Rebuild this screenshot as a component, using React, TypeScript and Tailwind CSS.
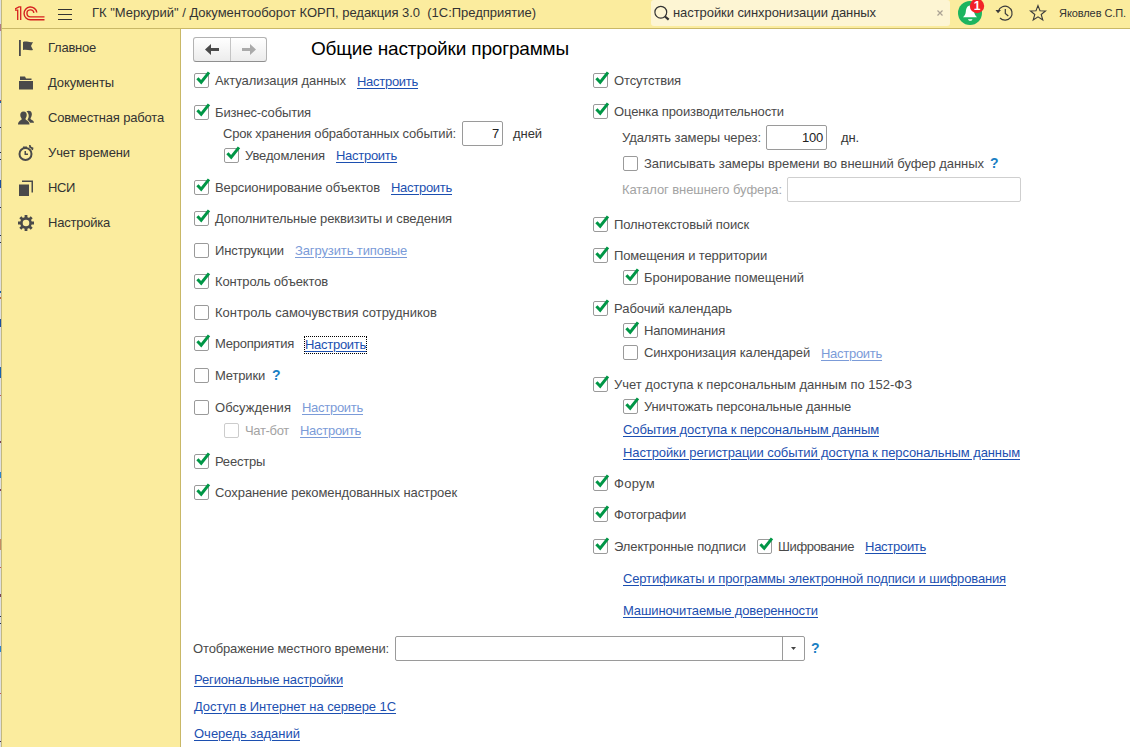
import { useMemo, type ReactNode } from "react";

const FAMILY = '"Liberation Sans", Arial, sans-serif';

/** Single line of text whose letter spacing is fitted to a given width. */
function T({ children, w, size = 13, className = "" }: { children: string; w: number; size?: number; className?: string }) {
  const spacing = useMemo(() => {
    const ctx = document.createElement("canvas").getContext("2d");
    if (!ctx) return 0;
    ctx.font = `${size}px ${FAMILY}`;
    return (w - ctx.measureText(children).width) / children.length;
  }, [children, w, size]);
  return (
    <span className={`shrink-0 whitespace-pre ${className}`} style={{ letterSpacing: `${spacing}px`, fontSize: `${size}px` }}>
      {children}
    </span>
  );
}

function Link({ children, w, off = false, className = "" }: { children: string; w: number; off?: boolean; className?: string }) {
  return (
    <a className={`flex shrink-0 underline decoration-1 underline-offset-2 ${off ? "text-[#7b9bd8]" : "text-[#1c4fb0]"} ${className}`}>
      <T w={w}>{children}</T>
    </a>
  );
}

const Setup = ({ off, className }: { off?: boolean; className?: string }) => (
  <Link w={61} off={off} className={className ?? "ml-[11px]"}>Настроить</Link>
);

function Check({ on = false, off = false, className = "" }: { on?: boolean; off?: boolean; className?: string }) {
  return (
    <span className={`mr-1.5 flex h-[15px] w-[15px] shrink-0 rounded-[2px] border bg-white ${off ? "border-[#cccccc]" : "border-[#9a9a9a]"} ${className}`}>
      {on && (
        <svg viewBox="0 0 16 16" className="-mt-0.5 h-4 w-4 shrink-0 overflow-visible">
          <path d="M2.4 6.2 L6.2 10.2 L14 .4" fill="none" stroke="#009646" strokeWidth="3" />
        </svg>
      )}
    </span>
  );
}

const Help = ({ className = "ml-[7px]" }: { className?: string }) => (
  <span className={`text-[14px] font-bold text-[#1a7fc4] ${className}`}>?</span>
);

function Row({ children, className = "" }: { children: ReactNode; className?: string }) {
  return <div className={`flex h-[21px] shrink-0 items-center leading-[21px] ${className}`}>{children}</div>;
}

function LeftColumn() {
  return (
    <div className="flex w-[399px] shrink-0 flex-col">
      <Row><Check on /><T w={131}>Актуализация данных</T><Setup className="mt-0.5 ml-[11px]" /></Row>
      <Row className="mt-[11px]"><Check on /><T w={96}>Бизнес-события</T></Row>
      <Row className="pl-[29px]">
        <T w={233}>Срок хранения обработанных событий:</T>
        <span className="ml-1.5 flex h-[25px] w-[41px] shrink-0 items-center justify-end rounded-[2px] border border-[#9a9a9a] pr-[3px] text-[#222]"><T w={7}>7</T></span>
        <T w={29} className="ml-[10px] text-[#333]">дней</T>
      </Row>
      <Row className="mt-px pl-[30px]"><Check on /><T w={80}>Уведомления</T><Setup /></Row>
      <Row className="mt-[11px]"><Check on /><T w={165}>Версионирование объектов</T><Setup /></Row>
      <Row className="mt-[10px]"><Check on /><T w={237}>Дополнительные реквизиты и сведения</T></Row>
      <Row className="mt-[11px]"><Check /><T w={69}>Инструкции</T><Link w={112} off className="ml-[11px]">Загрузить типовые</Link></Row>
      <Row className="mt-[10px]"><Check on /><T w={113}>Контроль объектов</T></Row>
      <Row className="mt-[10px]"><Check /><T w={222}>Контроль самочувствия сотрудников</T></Row>
      <Row className="mt-[10px]">
        <Check on /><T w={79}>Мероприятия</T>
        <Setup className="mt-0.5 ml-[10px] h-[18px] w-[63px] items-center border border-dotted border-black" />
      </Row>
      <Row className="mt-[11px]"><Check /><T w={50}>Метрики</T><Help /></Row>
      <Row className="mt-[11px]"><Check /><T w={76}>Обсуждения</T><Setup off /></Row>
      <Row className="mt-0.5 pl-[30px]"><Check off /><T w={44} className="text-[#a3a3a3]">Чат-бот</T><Setup off /></Row>
      <Row className="mt-[10px]"><Check on /><T w={50}>Реестры</T></Row>
      <Row className="mt-[10px]"><Check on /><T w={242}>Сохранение рекомендованных настроек</T></Row>
    </div>
  );
}

function RightColumn() {
  return (
    <div className="flex flex-1 flex-col">
      <Row><Check on /><T w={67}>Отсутствия</T></Row>
      <Row className="mt-[10px]"><Check on /><T w={170}>Оценка производительности</T></Row>
      <Row className="mt-[5px] pl-[29px]">
        <T w={139}>Удалять замеры через:</T>
        <span className="ml-[5px] flex h-[25px] w-[61px] shrink-0 items-center justify-end rounded-[2px] border border-[#9a9a9a] pr-[3px] text-[#222]"><T w={21}>100</T></span>
        <T w={18} className="ml-[14px] text-[#333]">дн.</T>
      </Row>
      <Row className="mt-[5px] pl-[30px]"><Check /><T w={340}>Записывать замеры времени во внешний буфер данных</T><Help className="ml-1.5" /></Row>
      <Row className="mt-[5px] pl-[29px]">
        <T w={160} className="text-[#a3a3a3]">Каталог внешнего буфера:</T>
        <span className="ml-[5px] h-[25px] w-[234px] shrink-0 rounded-[2px] border border-[#cfcfcf]" />
      </Row>
      <Row className="mt-[14px]"><Check on /><T w={135}>Полнотекстовый поиск</T></Row>
      <Row className="mt-[10px]"><Check on /><T w={153}>Помещения и территории</T></Row>
      <Row className="mt-px pl-[30px]"><Check on /><T w={160}>Бронирование помещений</T></Row>
      <Row className="mt-[10px]"><Check on /><T w={118}>Рабочий календарь</T></Row>
      <Row className="mt-px pl-[30px]"><Check on /><T w={81}>Напоминания</T></Row>
      <Row className="mt-px pl-[30px]"><Check /><T w={166}>Синхронизация календарей</T><Setup off className="mt-0.5 ml-[11px]" /></Row>
      <Row className="mt-[11px]"><Check on /><T w={298}>Учет доступа к персональным данным по 152-ФЗ</T></Row>
      <Row className="mt-px pl-[30px]"><Check on /><T w={207}>Уничтожать персональные данные</T></Row>
      <Row className="mt-0.5 pl-[30px]"><Link w={256}>События доступа к персональным данным</Link></Row>
      <Row className="mt-0.5 pl-[30px]"><Link w={397}>Настройки регистрации событий доступа к персональным данным</Link></Row>
      <Row className="mt-[10px]"><Check on /><T w={41}>Форум</T></Row>
      <Row className="mt-[10px]"><Check on /><T w={72}>Фотографии</T></Row>
      <Row className="mt-[11px]">
        <Check on /><T w={132}>Электронные подписи</T>
        <Check on className="ml-[11px]" /><T w={76}>Шифрование</T><Setup />
      </Row>
      <Row className="mt-[11px] pl-[30px]"><Link w={383}>Сертификаты и программы электронной подписи и шифрования</Link></Row>
      <Row className="mt-[11px] pl-[30px]"><Link w={195}>Машиночитаемые доверенности</Link></Row>
    </div>
  );
}

function Header() {
  return (
    <header className="flex h-[29px] shrink-0 items-center border-b border-[#c9b867] bg-[#fbec9e] leading-[26px] text-[#333]">
      <svg viewBox="0 0 30 15" className="-mt-px ml-[13px] h-[15px] w-[30px] shrink-0" fill="none" stroke="#d6201f">
        <path d="M0 4.200h2.700V14M0 2.900L4 .8h1.700V14" strokeWidth="1.300" />
        <path d="M21.800 6.500A6.400 6.400 0 1 0 15.400 13.800H29.500" strokeWidth="1.400" />
        <path d="M18.900 6.800A3.500 3.500 0 1 0 15.400 10.900H29.500" strokeWidth="1.400" />
      </svg>
      <svg viewBox="0 0 14 12" className="mt-px ml-[13px] h-3 w-3.5 shrink-0" fill="none" stroke="#333">
        <path d="M0 .5h14M0 5.5h14M0 10.5h14" />
      </svg>
      <T w={444} className="-mt-0.5 ml-5">{'ГК "Меркурий" / Документооборот КОРП, редакция 3.0  (1С:Предприятие)'}</T>
      <div className="-mt-0.5 ml-[115px] flex h-[26px] w-[299px] shrink-0 items-center rounded-[3px] bg-[#fdf5d3]">
        <svg viewBox="0 0 16 16" className="ml-[3px] h-4 w-4 shrink-0" fill="none" stroke="#333">
          <circle cx="6.8" cy="7.2" r="5.9" strokeWidth="1.2" />
          <path d="M11 11.5l3.7 3.2" strokeWidth="2.2" />
        </svg>
        <T w={203} className="ml-[3px]">настройки синхронизации данных</T>
        <svg viewBox="0 0 6 6" className="ml-[61px] h-1.5 w-1.5 shrink-0" stroke="#aaa294" strokeWidth="1.200"><path d="M.5.5l5 5M5.5.5l-5 5" /></svg>
      </div>
      <svg viewBox="0 0 28 28" className="ml-2 h-7 w-7 shrink-0">
        <circle cx="12" cy="13" r="12" fill="#1cb45f" />
        <path d="M12 5.5c-3.2.4-3.8 3.3-4.2 6.2-.3 2.5-1 3.8-2.8 5.6h14c-1.800-1.800-2.500-3.100-2.800-5.600C15.800 8.800 15.200 5.900 12 5.500zM10 19.300h4.500c-.4 1-1.200 1.500-2.200 1.500s-1.900-.5-2.300-1.500z" fill="#fff" />
        <circle cx="19" cy="6" r="7.2" fill="#f22227" />
        <text x="19" y="10" textAnchor="middle" fontSize="12" fontWeight="bold" fill="#fff">1</text>
      </svg>
      <svg viewBox="0 0 16 16" className="-mt-0.5 ml-[11px] h-4 w-4 shrink-0 overflow-visible" fill="none" stroke="#3b3b3b" strokeWidth="1.2">
        <path d="M1.400 6A7 7 0 1 1 3 13M8.300 4v4.500l3 2.500" />
        <path d="M-1.500 5h5.500L1 8.300z" fill="#3b3b3b" stroke="none" />
      </svg>
      <svg viewBox="0 0 16 16" className="-mt-0.5 ml-[17px] h-4 w-4 shrink-0 overflow-visible" fill="none" stroke="#3b3b3b" strokeWidth="1.1">
        <path d="M8 .6l2 5.200 5.500.2-4.300 3.500 1.600 5.500L8 11.900 3.200 15l1.600-5.500L.5 6l5.500-.2z" />
      </svg>
      <T w={67} size={11} className="-mt-0.5 ml-[13px]">Яковлев С.П.</T>
    </header>
  );
}

const menu: { label: string; w: number; icon: ReactNode }[] = [
  { label: "Главное", w: 48, icon: <path d="M1 0h1.800v16H1zM5 2c3.500-1.300 6 .8 10 0l-2 4 2 4c-4 .8-6.500-1-10 0z" /> },
  { label: "Документы", w: 66, icon: <path d="M2 1.500h5l1 2h5.500V5H2zM1 6h14v8.500H1z" /> },
  {
    label: "Совместная работа", w: 116,
    icon: (
      <>
        <path d="M8.500 1.300c3-1.500 5.800 0 5.300 3.500-.2 1.900-1 2.900-1.300 3.700 0 1.500 3.500 1.500 3.500 4.300H12c-.5-1.700-2-2.300-2.500-3 2-3 1.500-6-1-8.500z" />
        <path d="M5.500 1.500c2.500 0 3.500 1.700 3.200 4C8.500 7.300 7.600 8 7.500 9c0 1.500 4 1.500 4 5.500H0C0 10.500 3.700 10.500 3.700 9 3.500 8 2.500 7.300 2.300 5.500c-.3-2.300.9-4 3.200-4z" />
      </>
    ),
  },
  {
    label: "Учет времени", w: 82,
    icon: (
      <>
        <circle cx="7.500" cy="9" r="6" fill="none" stroke="#4a4a4a" strokeWidth="2" />
        <path d="M6.500 6H8v2.500h2V10H6.500zM11 0h1.500l.7 1.800 2.300.9-.5 2.300-1.200.3-.5-1.500-2-1zM5 1.500h4V3H5z" />
      </>
    ),
  },
  { label: "НСИ", w: 27, icon: <path d="M1 4.500h10V16H1zM4 .5h11v12h-1.500V2H4z" /> },
  {
    label: "Настройка", w: 62,
    icon: (
      <>
        <circle cx="8" cy="8" r="4.600" fill="none" stroke="#4a4a4a" strokeWidth="2.600" />
        <path d="M8 0v3M8 13v3M0 8h3M13 8h3M2.300 2.300l2.200 2.200M11.500 11.500l2.200 2.200M2.300 13.700l2.200-2.200M11.500 4.500l2.200-2.200" stroke="#4a4a4a" strokeWidth="2.800" />
      </>
    ),
  },
];

/** Sliver of the window behind, visible along the left edge. */
function BackWindowEdge() {
  return (
    <div className="flex w-0.5 shrink-0 flex-col border-r border-[#c4b97c] bg-[#dddde0]">
      <i className="mt-[24px] h-[7px] bg-[#b07a86]" />
      <i className="mt-[69px] h-px bg-[#b5483f]" />
      <i className="h-0.5 bg-[#1d5fa8]" />
      <i className="mt-[24px] h-px bg-[#22304f]" />
      <i className="mt-[24px] h-px bg-[#22304f]" />
      <i className="mt-[6px] h-px bg-[#22304f]" />
      <i className="mt-[20px] h-2 bg-[#1d4f9f]" />
      <i className="mt-[19px] h-px bg-[#22304f]" />
      <i className="mt-[27px] h-px bg-[#22304f]" />
      <i className="mt-[6px] h-px bg-[#22304f]" />
      <i className="mt-[48px] h-0.5 bg-[#1d5fa8]" />
      <i className="mt-[4px] h-0.5 bg-[#b5683f]" />
      <i className="mt-[20px] h-2 bg-[#1d4f9f]" />
      <i className="mt-[40px] h-[11px] bg-[#1a62ae]" />
      <i className="mt-[17px] h-px bg-[#c25858]" />
      <i className="mt-[45px] h-0.5 bg-[#7a4258]" />
      <i className="mt-[29px] h-1.5 bg-[#2d83cc]" />
      <i className="mt-[11px] h-0.5 bg-[#7a4258]" />
      <i className="mt-[48px] h-[11px] bg-[#c48c63]" />
      <i className="mt-[17px] h-px bg-[#c25858]" />
      <i className="mt-[26px] h-[3px] bg-[#7a4258]" />
      <i className="mt-[19px] h-px bg-[#22304f]" />
      <i className="mt-[6px] h-px bg-[#22304f]" />
      <i className="mt-[22px] h-1.5 bg-[#2d83cc]" />
      <i className="mt-[41px] h-px bg-[#c25858]" />
      <i className="mt-[47px] h-px bg-[#42304f]" />
    </div>
  );
}

export default function App() {
  return (
    <div className="flex h-[747px] w-[1130px] overflow-hidden bg-white font-['Liberation_Sans',Arial,sans-serif] text-[13px] text-[#4a4a4a]">
      <BackWindowEdge />
      <div className="flex min-w-0 flex-1 flex-col">
        <Header />
        <div className="flex min-h-0 flex-1">
          <nav className="flex w-[179px] shrink-0 flex-col border-r border-[#c9b867] bg-[#fbec9e] pt-px text-[#333]">
            {menu.map((m) => (
              <div key={m.label} className="flex h-[35px] items-center pl-4 leading-[35px]">
                <svg viewBox="0 0 16 16" className="mr-3.5 h-4 w-4 shrink-0" fill="#4a4a4a">{m.icon}</svg>
                <T w={m.w}>{m.label}</T>
              </div>
            ))}
          </nav>
          <main className="flex flex-1 flex-col">
            <div className="flex h-[41px] shrink-0 items-center pl-3">
              <div className="flex h-[25px] w-[74px] shrink-0 rounded-[3px] border border-[#b3b3b3] border-b-[#8f8f8f] bg-linear-to-b from-white to-[#ececec]">
                <span className="flex w-[37px] items-center justify-center border-r border-[#c4c4c4]">
                  <svg viewBox="0 0 14 11" className="h-[11px] w-3.5"><path d="M0 5.500L6 0v4h8v3H6v4z" fill="#4a4a4a" /></svg>
                </span>
                <span className="flex flex-1 items-center justify-center">
                  <svg viewBox="0 0 14 11" className="h-[11px] w-3.5"><path d="M14 5.500L8 0v4H0v3h8v4z" fill="#aaaaaa" /></svg>
                </span>
              </div>
              <T w={258} size={19} className="ml-11 text-black">Общие настройки программы</T>
            </div>
            <div className="flex h-[568px] shrink-0 pl-[13px]">
              <LeftColumn />
              <RightColumn />
            </div>
            <div className="flex flex-col pl-[13px]">
              <Row className="-ml-px">
                <T w={196}>Отображение местного времени:</T>
                <span className="ml-1.5 flex h-[25px] w-[410px] shrink-0 justify-end rounded-[2px] border border-[#9a9a9a]">
                  <span className="flex w-[22px] items-center justify-center border-l border-[#9a9a9a]">
                    <svg viewBox="0 0 5 3" className="h-[3px] w-[5px]"><path d="M0 0h5L2.500 3z" fill="#444" /></svg>
                  </span>
                </span>
                <Help className="ml-1.5" />
              </Row>
              <Row className="mt-[10px]"><Link w={149}>Региональные настройки</Link></Row>
              <Row className="mt-1.5"><Link w={202}>Доступ в Интернет на сервере 1С</Link></Row>
              <Row className="mt-1.5"><Link w={106}>Очередь заданий</Link></Row>
            </div>
          </main>
        </div>
      </div>
    </div>
  );
}
